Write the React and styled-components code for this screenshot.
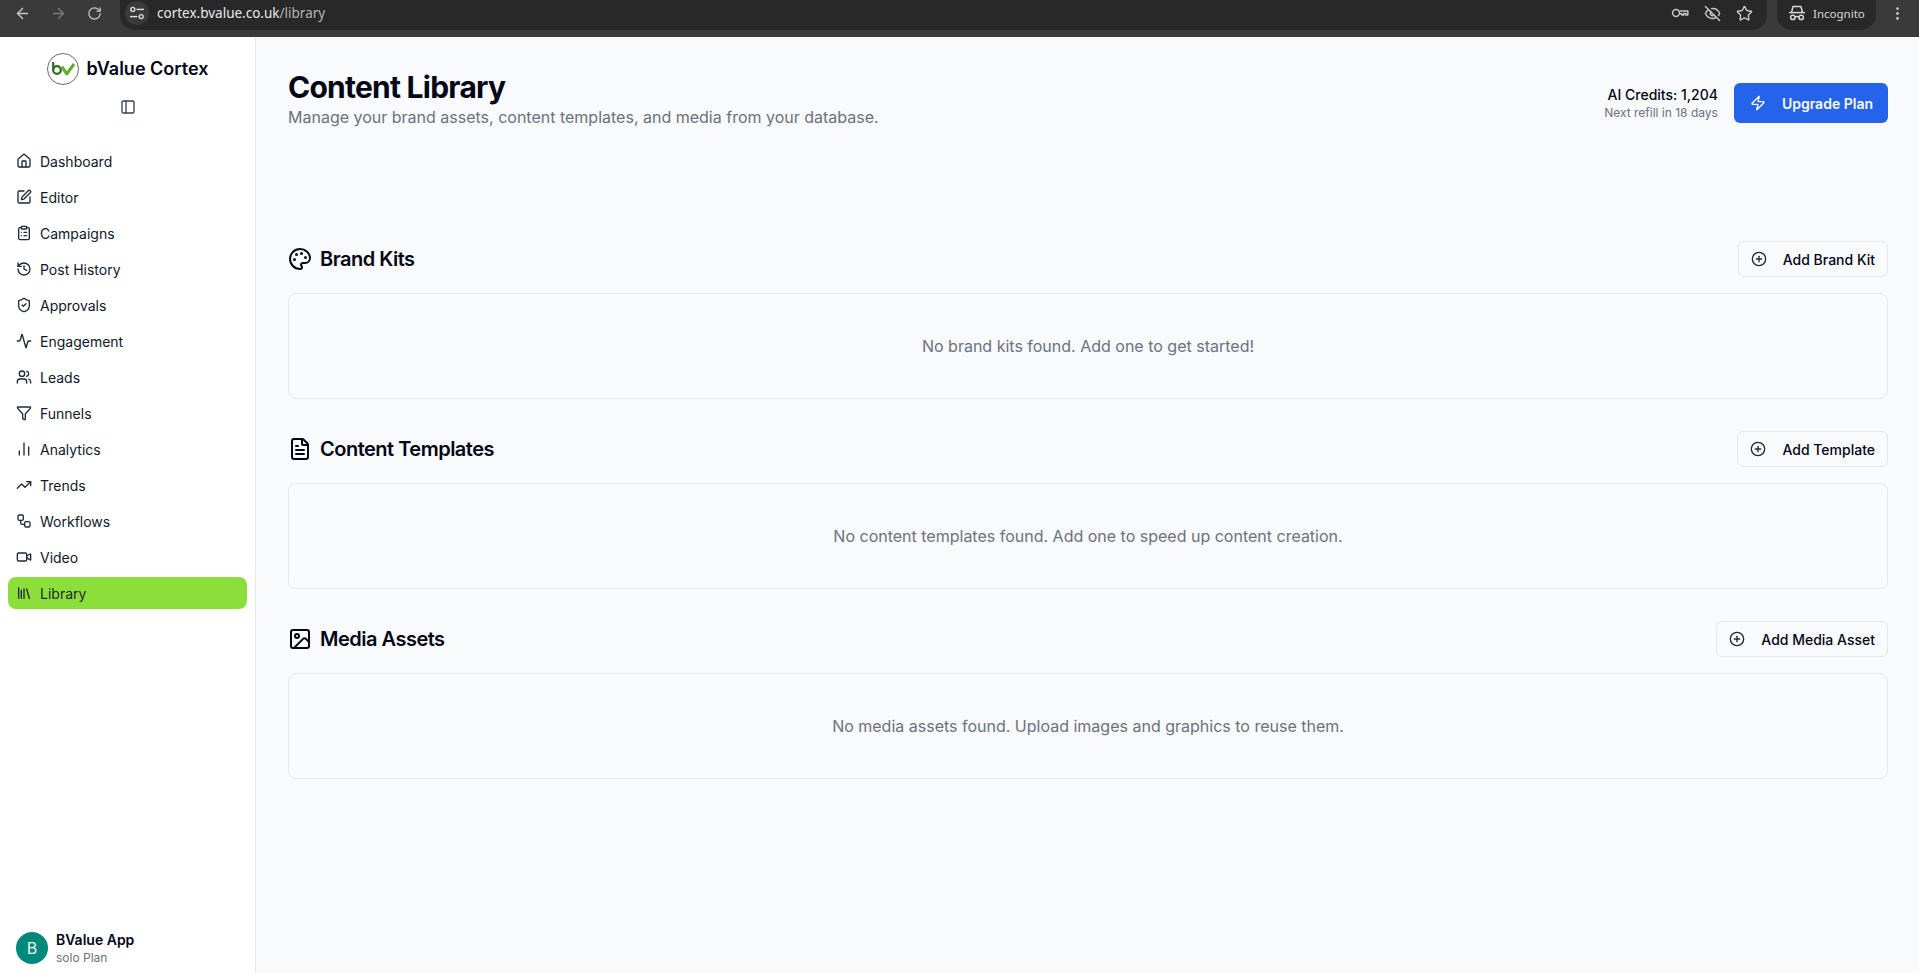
import React from "react";
import styled, { createGlobalStyle } from "styled-components";
import {
  ArrowLeft, ArrowRight, RotateCw, EyeOff, Star, EllipsisVertical,
  House, SquarePen, ClipboardList, History, ShieldCheck, Activity, Users, Funnel,
  ChartNoAxesColumn, TrendingUp, Workflow, Video, Library, PanelLeft, Zap, Palette,
  FileText, Image, CirclePlus,
} from "lucide-react";

const Global = createGlobalStyle`
  html, body { margin: 0; padding: 0; height: 100%; overflow: hidden; }
  body { font-family: Inter, "Liberation Sans", sans-serif; background: #f9fafb; color: #020617; }
  * { box-sizing: border-box; }
`;

const Page = styled.div`
  display: flex; flex-direction: column; height: 973px; overflow: hidden;
`;
const Chrome = styled.header`
  height: 37px; flex: none; background: #3a3a3a; display: flex; align-items: flex-start; color: #c7c7c7;
`;
const NavGroup = styled.div`
  width: 120px; height: 26px; flex: none; padding-left: 13px; display: flex; align-items: center; gap: 18px;
`;
const NavButton = styled.span`
  display: flex; width: 18px; justify-content: center; color: ${p => (p.$dim ? "#7a7a7a" : "#c7c7c7")};
`;
const Omnibox = styled.div`
  flex: 1; height: 30px; background: #282828; border-radius: 0 0 15px 15px; display: flex; align-items: center;
  padding: 0 14px 4px 5px; margin-right: 10px;
`;
const SiteInfo = styled.span`
  width: 24px; height: 24px; border-radius: 50%; background: #3a3a3a; color: #dcdcdc; display: flex;
  align-items: center; justify-content: center; margin-right: 8px;
`;
const Url = styled.span`
  font: 13.5px "Noto Sans", sans-serif; color: #e3e3e3; flex: 1;
`;
const UrlHost = styled.span` color: #e8e8e8; `;
const UrlPath = styled.span` color: #b5b5b5; `;
const OmniIcons = styled.div` display: flex; align-items: center; gap: 15px; color: #c7c7c7; `;
const Incognito = styled.div`
  width: 99px; height: 30px; background: #282828; border-radius: 0 0 15px 15px; display: flex; align-items: center;
  gap: 7px; padding: 0 0 4px 11px; font: 11.5px "Noto Sans", sans-serif; color: #d8d8d8; flex: none;
`;
const MoreButton = styled.span`
  display: flex; height: 26px; align-items: center; width: 43px; justify-content: center; flex: none;
`;

const Body = styled.div` flex: 1; display: flex; min-height: 0; `;
const Sidebar = styled.aside`
  width: 256px; flex: none; background: #fff; border-right: 1px solid #e5e7eb; display: flex; flex-direction: column;
  padding: 16px 8px;
`;
const Brand = styled.div`
  display: flex; align-items: center; justify-content: center; gap: 8px; height: 32px;
`;
const BrandName = styled.span` font-size: 18px; font-weight: 600; color: #020617; line-height: 28px; `;
const Collapse = styled.div`
  height: 16px; margin-top: 14px; display: flex; justify-content: center; color: #374151; padding-left: 1px;
`;
const Nav = styled.nav`
  margin-top: 30px; display: flex; flex-direction: column; gap: 4px; flex: 1;
`;
const NavItem = styled.a`
  height: 32px; border-radius: 8px; padding: 0 8px; display: flex; align-items: center; gap: 8px; font-size: 14px;
  color: ${p => (p.$active ? "#1f2937" : "#0f172a")};
  background: ${p => (p.$active ? "#8cde3a" : "transparent")};
  svg { color: #1f2937; flex: none; }
`;
const Account = styled.div` display: flex; align-items: center; gap: 8px; padding: 0 8px; margin-bottom: -9px; `;
const Avatar = styled.span`
  width: 32px; height: 32px; border-radius: 50%; background: #00897b; color: #e6f7f3; display: flex; align-items: center;
  justify-content: center; font-size: 16px;
`;
const AccountText = styled.div` display: flex; flex-direction: column; `;
const AccountName = styled.span` font-size: 14px; font-weight: 600; line-height: 20px; color: #020617; `;
const AccountPlan = styled.span` font-size: 12px; line-height: 16px; color: #6b7280; `;

const Main = styled.main` flex: 1; min-width: 0; padding: 32px 31px 0 32px; background: #f9fafb; `;
const PageHead = styled.div`
  display: flex; justify-content: space-between; align-items: flex-start; margin-bottom: 112px; height: 60px;
`;
const Title = styled.h1` margin: 0; font-size: 30px; line-height: 36px; font-weight: 700; letter-spacing: -0.75px; color: #020617; `;
const Subtitle = styled.p` margin: 0; font-size: 16px; line-height: 24px; color: #6b7280; `;
const HeadRight = styled.div` display: flex; align-items: center; gap: 16px; margin-top: 14px; `;
const Credits = styled.div` display: flex; flex-direction: column; align-items: flex-end; `;
const CreditsValue = styled.span` font-size: 14px; font-weight: 500; line-height: 20px; color: #020617; `;
const CreditsNote = styled.span` font-size: 12px; line-height: 16px; color: #6b7280; `;
const Upgrade = styled.button`
  height: 40px; border: 0; border-radius: 6px; background: #2563eb; color: #f8fafc; font: 600 14px Inter, sans-serif;
  display: flex; align-items: center; gap: 16px; padding: 0 15px 0 16px; white-space: nowrap;
`;
const Sections = styled.div` display: flex; flex-direction: column; gap: 32px; `;
const Section = styled.section` display: flex; flex-direction: column; gap: 16px; `;
const SectionHead = styled.div` display: flex; justify-content: space-between; align-items: center; height: 36px; `;
const SectionTitle = styled.h2`
  margin: 0; display: flex; align-items: center; gap: 8px; font-size: 20px; line-height: 28px; font-weight: 600;
  letter-spacing: -0.5px; color: #020617;
`;
const OutlineButton = styled.button`
  height: 36px; border: 1px solid #e5e7eb; border-radius: 6px; background: #f9fafb; color: #020617; font: 500 14px Inter, sans-serif;
  display: flex; align-items: center; gap: 16px; padding: 0 12px; svg { color: #1f2937; }
`;
const EmptyPanel = styled.div`
  height: 106px; border: 1px solid #e5e7eb; border-radius: 8px; display: flex; align-items: center; justify-content: center;
  font-size: 16px; color: #6b7280;
`;

const SiteIcon = () => (
  <svg width="16" height="16" viewBox="0 0 16 16" fill="none" stroke="currentColor" strokeWidth="1.4">
    <circle cx="3.8" cy="4.4" r="2" />
    <path d="M7.5 4.4H15" />
    <path d="M1 11.6h7.5" />
    <circle cx="12.2" cy="11.6" r="2" />
  </svg>
);
const KeyIcon = () => (
  <svg width="18" height="18" viewBox="0 0 18 18" fill="none" stroke="currentColor" strokeWidth="1.5">
    <circle cx="5" cy="9" r="3.4" />
    <path d="M8.4 7h8.4v4h-2v-1.6h-2V11h-2V9.8H8.4" strokeLinejoin="round" />
  </svg>
);
const IncognitoIcon = () => (
  <svg width="18" height="18" viewBox="0 0 18 18" fill="none" stroke="currentColor" strokeWidth="1.5">
    <path d="M1 8.6h16" />
    <path d="M3.6 8.2 5 2.6h8l1.4 5.6" strokeLinejoin="round" />
    <circle cx="4.8" cy="13.4" r="2.2" />
    <circle cx="13.2" cy="13.4" r="2.2" />
    <path d="M7 13c1.2-.7 2.8-.7 4 0" />
  </svg>
);
const Logo = () => (
  <svg width="32" height="32" viewBox="0 0 32 32">
    <circle cx="16" cy="16" r="15.5" fill="#fff" stroke="#6b6b6b" strokeWidth="1" />
    <path d="M6.2 9v8" stroke="#2e6b1e" strokeWidth="2.2" fill="none" />
    <circle cx="10" cy="17" r="3.8" stroke="#2e6b1e" strokeWidth="2.2" fill="none" />
    <path d="M15 13.6 19.7 21 27 11" stroke="#62ad28" strokeWidth="3" fill="none" strokeLinejoin="round" />
  </svg>
);

const items = [
  ["Dashboard", House], ["Editor", SquarePen], ["Campaigns", ClipboardList], ["Post History", History],
  ["Approvals", ShieldCheck], ["Engagement", Activity], ["Leads", Users], ["Funnels", Funnel],
  ["Analytics", ChartNoAxesColumn], ["Trends", TrendingUp], ["Workflows", Workflow], ["Video", Video],
  ["Library", Library],
];
const sections = [
  { title: "Brand Kits", icon: Palette, action: "Add Brand Kit", empty: "No brand kits found. Add one to get started!" },
  { title: "Content Templates", icon: FileText, action: "Add Template", empty: "No content templates found. Add one to speed up content creation." },
  { title: "Media Assets", icon: Image, action: "Add Media Asset", empty: "No media assets found. Upload images and graphics to reuse them." },
];

export default function App() {
  return (
    <Page>
      <Global />
      <Chrome>
        <NavGroup>
          <NavButton><ArrowLeft size={17} /></NavButton>
          <NavButton $dim><ArrowRight size={17} /></NavButton>
          <NavButton><RotateCw size={15} /></NavButton>
        </NavGroup>
        <Omnibox>
          <SiteInfo><SiteIcon /></SiteInfo>
          <Url><UrlHost>cortex.bvalue.co.uk</UrlHost><UrlPath>/library</UrlPath></Url>
          <OmniIcons>
            <KeyIcon />
            <EyeOff size={17} />
            <Star size={17} />
          </OmniIcons>
        </Omnibox>
        <Incognito><IncognitoIcon />Incognito</Incognito>
        <MoreButton><EllipsisVertical size={17} /></MoreButton>
      </Chrome>
      <Body>
        <Sidebar>
          <Brand><Logo /><BrandName>bValue Cortex</BrandName></Brand>
          <Collapse><PanelLeft size={16} /></Collapse>
          <Nav>
            {items.map(([label, Icon]) => (
              <NavItem key={label} $active={label === "Library"}><Icon size={16} />{label}</NavItem>
            ))}
          </Nav>
          <Account>
            <Avatar>B</Avatar>
            <AccountText>
              <AccountName>BValue App</AccountName>
              <AccountPlan>solo Plan</AccountPlan>
            </AccountText>
          </Account>
        </Sidebar>
        <Main>
          <PageHead>
            <div>
              <Title>Content Library</Title>
              <Subtitle>Manage your brand assets, content templates, and media from your database.</Subtitle>
            </div>
            <HeadRight>
              <Credits>
                <CreditsValue>AI Credits: 1,204</CreditsValue>
                <CreditsNote>Next refill in 18 days</CreditsNote>
              </Credits>
              <Upgrade><Zap size={16} />Upgrade Plan</Upgrade>
            </HeadRight>
          </PageHead>
          <Sections>
            {sections.map(s => (
              <Section key={s.title}>
                <SectionHead>
                  <SectionTitle><s.icon size={24} />{s.title}</SectionTitle>
                  <OutlineButton><CirclePlus size={16} />{s.action}</OutlineButton>
                </SectionHead>
                <EmptyPanel>{s.empty}</EmptyPanel>
              </Section>
            ))}
          </Sections>
        </Main>
      </Body>
    </Page>
  );
}
